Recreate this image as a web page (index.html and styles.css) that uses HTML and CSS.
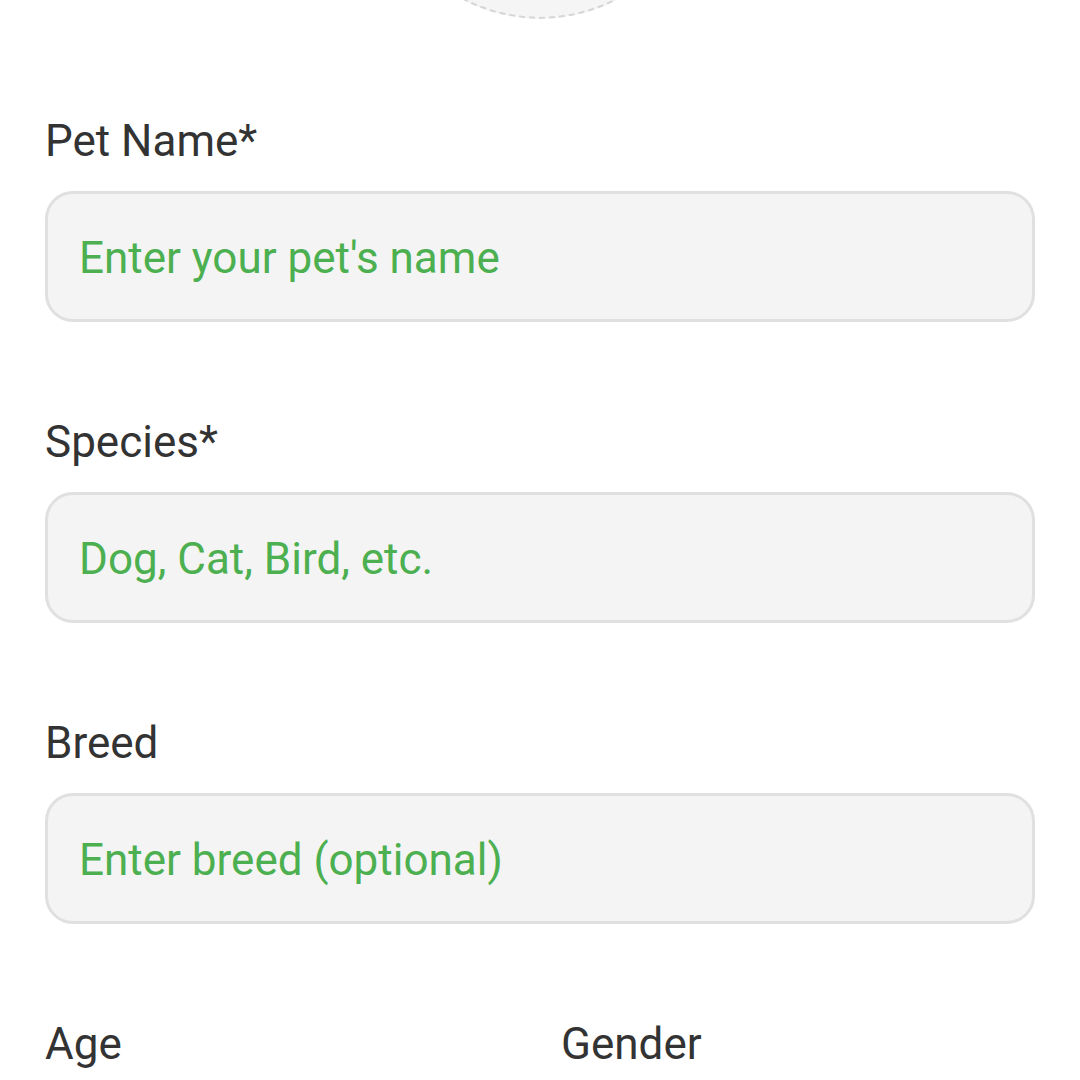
FILE: index.html
```html
<!DOCTYPE html>
<html lang="en">
<head>
<meta charset="utf-8">
<title>Add Pet</title>
<link rel="stylesheet" href="styles.css">
</head>
<body>
<div class="page">
  <div class="photo-wrap">
    <div class="photo"></div>
  </div>
  <form class="form">
    <div class="group">
      <label class="label">Pet Name*</label>
      <div class="input">Enter your pet's name</div>
    </div>
    <div class="group">
      <label class="label">Species*</label>
      <div class="input">Dog, Cat, Bird, etc.</div>
    </div>
    <div class="group">
      <label class="label">Breed</label>
      <div class="input">Enter breed (optional)</div>
    </div>
    <div class="row">
      <div class="group col">
        <label class="label">Age</label>
        <div class="input"></div>
      </div>
      <div class="group col">
        <label class="label">Gender</label>
        <div class="input"></div>
      </div>
    </div>
  </form>
</div>
</body>
</html>
```
FILE: styles.css
```css
html, body {
  margin: 0;
  padding: 0;
  background: #ffffff;
  overflow: hidden;
}
body {
  font-family: Roboto, "Noto Sans", "Liberation Sans", sans-serif;
  color: #333333;
}
.page {
  padding: 0 45px;
}
.photo-wrap {
  display: flex;
  justify-content: center;
  margin-top: -311px;
  margin-bottom: 97px;
}
.photo {
  width: 326px;
  height: 326px;
  border-radius: 50%;
  background: #f5f5f5;
  border: 2px dashed #d6d6d6;
}
.form {
  display: flex;
  flex-direction: column;
  gap: 95px;
}
.group {
  display: flex;
  flex-direction: column;
  gap: 24px;
}
.label {
  font-size: 44px;
  line-height: 51px;
  color: #333333;
}
.input {
  box-sizing: border-box;
  height: 131px;
  display: flex;
  align-items: center;
  padding: 2px 31px 0;
  background: #f4f4f4;
  border: 3px solid #e0e0e0;
  border-radius: 28px;
  font-size: 44px;
  color: #4caf50;
}
.row {
  display: flex;
  gap: 42px;
}
.col {
  flex: 1;
}
```
